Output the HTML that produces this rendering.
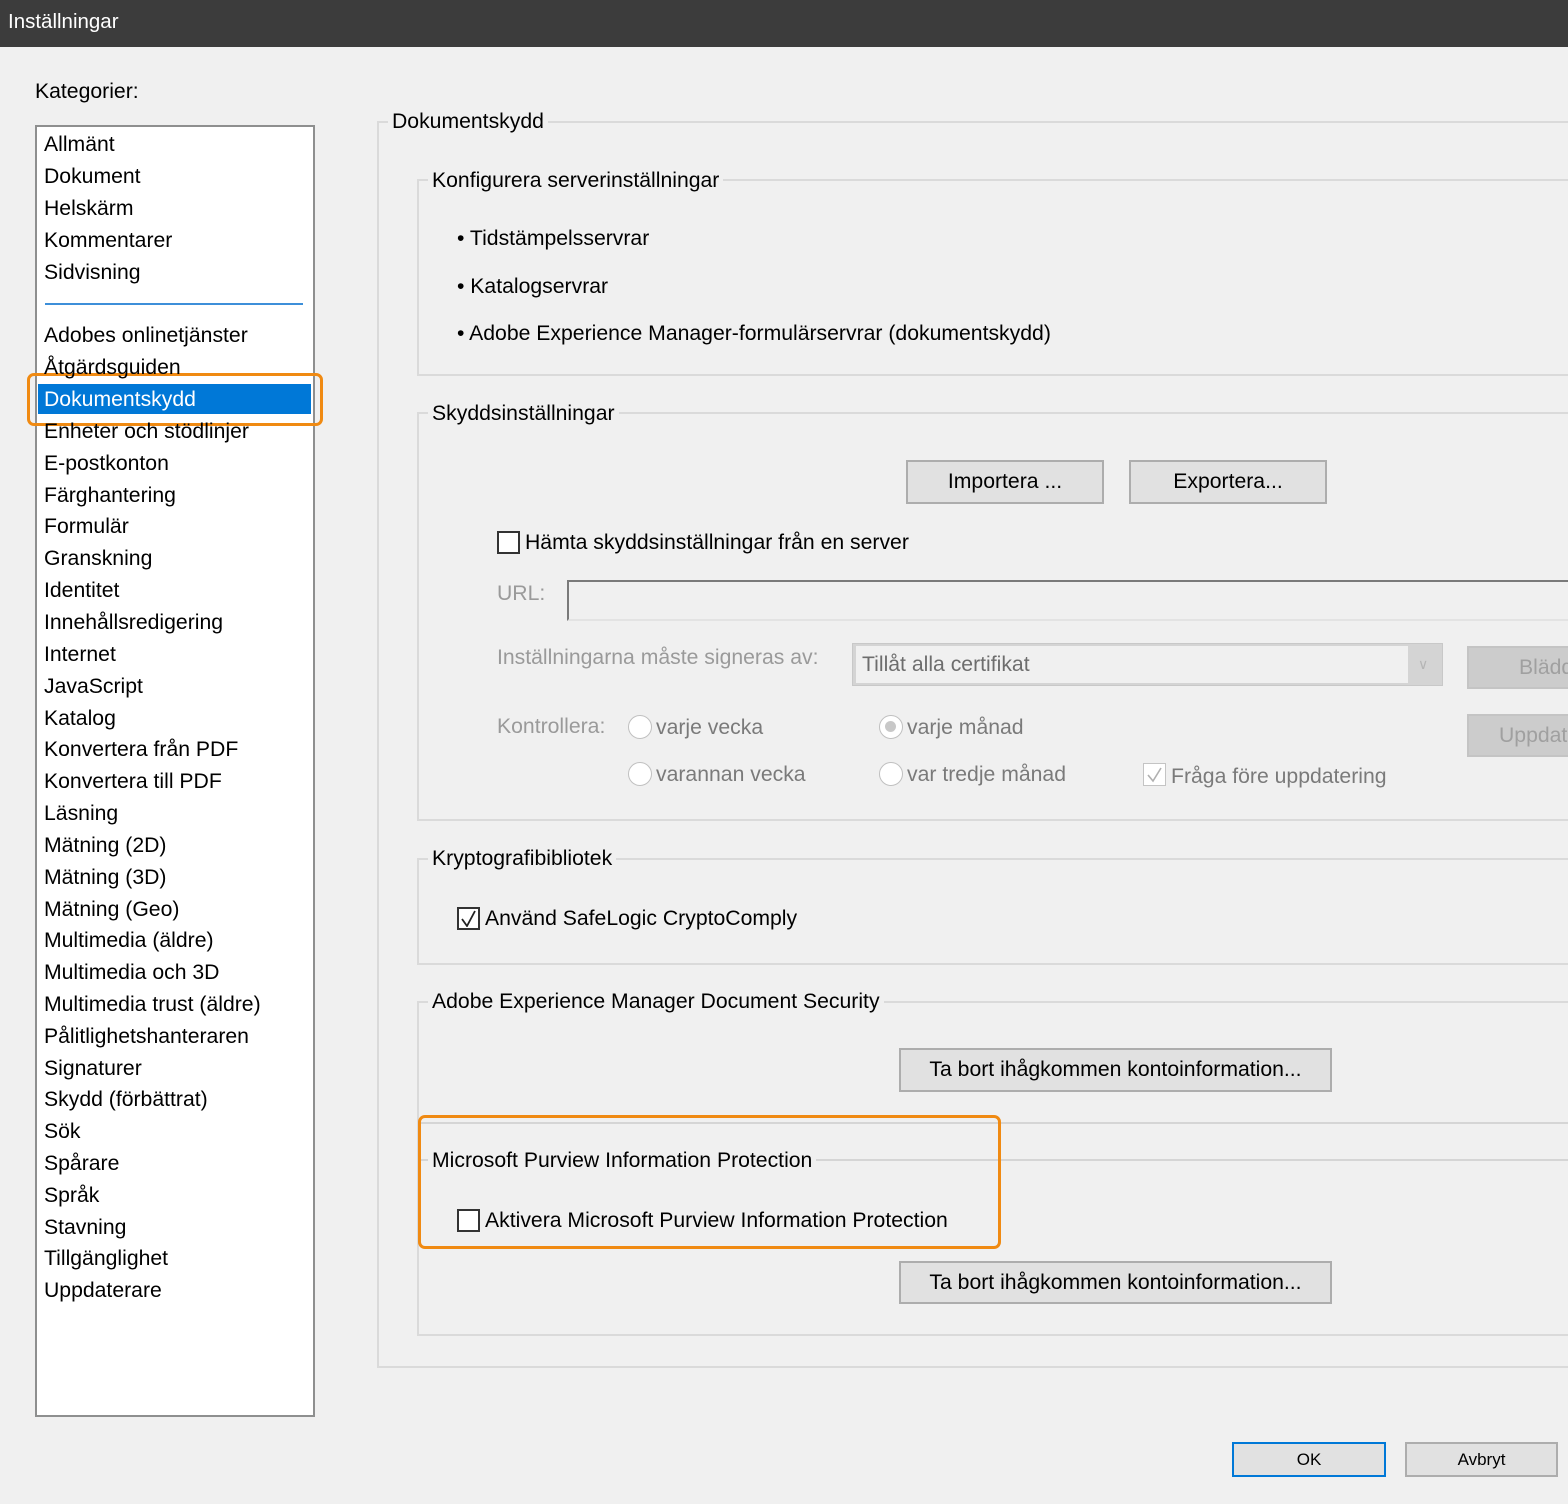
<!DOCTYPE html>
<html><head><meta charset="utf-8"><style>
*{margin:0;padding:0;box-sizing:border-box}
body{width:1568px;height:1504px;background:#f0f0f0;font-family:"Liberation Sans",sans-serif;font-size:21.2px;color:#000;position:relative;overflow:hidden}
.a{position:absolute}
.t{position:absolute;height:26px;line-height:28px;white-space:nowrap}
.g{color:#9a9a9a}
.ln{position:absolute;background:#d5d5d5}
.btn{position:absolute;background:#e1e1e1;border:2px solid #adadad;text-align:center;white-space:nowrap}
.dis{background:#cccccc;border:2px solid #c4c4c4;color:#a0a0a0}
.cb{position:absolute;width:23px;height:23px;border:2px solid #333;background:#fff}
.rd{position:absolute;width:24px;height:24px;border:1.5px solid #c0c0c0;border-radius:50%;background:#fff}
.leg{position:absolute;height:26px;line-height:28px;background:#f0f0f0;padding:0 4px;white-space:nowrap}
</style></head><body>
<div class="a" style="left:0;top:0;width:1568px;height:47px;background:#3c3c3c"></div>
<div class="t" style="left:8px;top:8px;color:#fff;font-size:20.5px">Inställningar</div>

<div class="t" style="left:35px;top:78px">Kategorier:</div>
<div class="a" style="left:35px;top:125px;width:280px;height:1292px;background:#fff;border:2px solid #8e8f8f"></div>
<div class="a" style="left:45px;top:303px;width:258px;height:2px;background:#3d8fd9"></div>
<div class="a" style="left:38px;top:384px;width:273px;height:30px;background:#0078d7"></div>
<div class="a" style="left:27px;top:373px;width:296px;height:53px;border:3px solid #f08a12;border-radius:7px"></div>

<div class="a" style="left:377px;top:121px;width:1300px;height:1247px;border:2px solid #dadada"></div>
<div class="leg" style="left:388px;top:108px">Dokumentskydd</div>

<div class="a" style="left:417px;top:179px;width:1300px;height:197px;border:2px solid #dadada"></div>
<div class="leg" style="left:428px;top:167px">Konfigurera serverinställningar</div>
<div class="t" style="left:457px;top:225px">• Tidstämpelsservrar</div>
<div class="t" style="left:457px;top:273px">• Katalogservrar</div>
<div class="t" style="left:457px;top:320px">• Adobe Experience Manager-formulärservrar (dokumentskydd)</div>

<div class="a" style="left:417px;top:412px;width:1300px;height:409px;border:2px solid #dadada"></div>
<div class="leg" style="left:428px;top:400px">Skyddsinställningar</div>
<div class="btn" style="left:906px;top:460px;width:198px;height:44px;line-height:40px">Importera ...</div>
<div class="btn" style="left:1129px;top:460px;width:198px;height:44px;line-height:40px">Exportera...</div>
<div class="cb" style="left:497px;top:531px"></div>
<div class="t" style="left:525px;top:529px">Hämta skyddsinställningar från en server</div>
<div class="t g" style="left:497px;top:580px">URL:</div>
<div class="a" style="left:567px;top:580px;width:1010px;height:41px;border-top:2px solid #7a7a7a;border-left:2px solid #7a7a7a;border-bottom:2px solid #e3e3e3;background:#f0f0f0"></div>
<div class="t g" style="left:497px;top:644px">Inställningarna måste signeras av:</div>
<div class="a" style="left:852px;top:643px;width:591px;height:43px;background:#d4d4d4;border:1px solid #c8c8c8"></div>
<div class="a" style="left:856px;top:646px;width:552px;height:37px;background:#f0f0f0"></div>
<div class="t" style="left:862px;top:651px;color:#6d6d6d">Tillåt alla certifikat</div>
<div class="t" style="left:1418px;top:650px;color:#b5b5b5;font-size:14px">∨</div>
<div class="btn dis" style="left:1467px;top:646px;width:120px;height:43px;line-height:39px;text-align:left;padding-left:50px">Bläddra</div>
<div class="t g" style="left:497px;top:713px">Kontrollera:</div>
<div class="rd" style="left:628px;top:715px"></div><div class="t" style="left:656px;top:714px;color:#7a7a7a">varje vecka</div>
<div class="rd" style="left:879px;top:715px"><div class="a" style="left:5px;top:5px;width:11px;height:11px;border-radius:50%;background:#c8c8c8"></div></div><div class="t" style="left:907px;top:714px;color:#7a7a7a">varje månad</div>
<div class="rd" style="left:628px;top:762px"></div><div class="t" style="left:656px;top:761px;color:#7a7a7a">varannan vecka</div>
<div class="rd" style="left:879px;top:762px"></div><div class="t" style="left:907px;top:761px;color:#7a7a7a">var tredje månad</div>
<div class="cb" style="left:1143px;top:763px;border:1.5px solid #c4c4c4"><svg class="a" style="left:2px;top:2px" width="17" height="17"><path d="M2 9 L7 15 L15 2" fill="none" stroke="#b0b0b0" stroke-width="1.6"/></svg></div>
<div class="t" style="left:1171px;top:763px;color:#7a7a7a">Fråga före uppdatering</div>
<div class="btn dis" style="left:1467px;top:714px;width:120px;height:43px;line-height:39px;text-align:left;padding-left:30px">Uppdatera</div>

<div class="a" style="left:417px;top:858px;width:1300px;height:107px;border:2px solid #dadada"></div>
<div class="leg" style="left:428px;top:845px">Kryptografibibliotek</div>
<div class="cb" style="left:457px;top:907px"><svg class="a" style="left:1px;top:1px" width="17" height="17"><path d="M2 9 L7 16 L15 1" fill="none" stroke="#222" stroke-width="1.8"/></svg></div>
<div class="t" style="left:485px;top:905px">Använd SafeLogic CryptoComply</div>

<div class="a" style="left:417px;top:1001px;width:1300px;height:335px;border:2px solid #dadada"></div>
<div class="leg" style="left:428px;top:988px">Adobe Experience Manager Document Security</div>
<div class="btn" style="left:899px;top:1048px;width:433px;height:44px;line-height:40px">Ta bort ihågkommen kontoinformation...</div>
<div class="ln" style="left:418px;top:1122px;width:1200px;height:2px"></div>
<div class="ln" style="left:418px;top:1159px;width:1200px;height:2px"></div>
<div class="leg" style="left:428px;top:1147px">Microsoft Purview Information Protection</div>
<div class="cb" style="left:457px;top:1209px"></div>
<div class="t" style="left:485px;top:1207px">Aktivera Microsoft Purview Information Protection</div>
<div class="btn" style="left:899px;top:1261px;width:433px;height:43px;line-height:39px">Ta bort ihågkommen kontoinformation...</div>
<div class="a" style="left:418px;top:1115px;width:583px;height:134px;border:3px solid #f08a12;border-radius:7px"></div>

<div class="btn" style="left:1232px;top:1442px;width:154px;height:35px;line-height:31px;border-color:#0078d7;font-size:17px">OK</div>
<div class="btn" style="left:1405px;top:1442px;width:153px;height:35px;line-height:31px;font-size:17px">Avbryt</div>

<div class="t" style="left:44px;top:131px">Allmänt</div>
<div class="t" style="left:44px;top:163px">Dokument</div>
<div class="t" style="left:44px;top:195px">Helskärm</div>
<div class="t" style="left:44px;top:227px">Kommentarer</div>
<div class="t" style="left:44px;top:259px">Sidvisning</div>
<div class="t" style="left:44px;top:322px">Adobes onlinetjänster</div>
<div class="t" style="left:44px;top:354px">Åtgärdsguiden</div>
<div class="t" style="left:44px;top:386px;color:#fff">Dokumentskydd</div>
<div class="t" style="left:44px;top:418px">Enheter och stödlinjer</div>
<div class="t" style="left:44px;top:450px">E-postkonton</div>
<div class="t" style="left:44px;top:482px">Färghantering</div>
<div class="t" style="left:44px;top:513px">Formulär</div>
<div class="t" style="left:44px;top:545px">Granskning</div>
<div class="t" style="left:44px;top:577px">Identitet</div>
<div class="t" style="left:44px;top:609px">Innehållsredigering</div>
<div class="t" style="left:44px;top:641px">Internet</div>
<div class="t" style="left:44px;top:673px">JavaScript</div>
<div class="t" style="left:44px;top:705px">Katalog</div>
<div class="t" style="left:44px;top:736px">Konvertera från PDF</div>
<div class="t" style="left:44px;top:768px">Konvertera till PDF</div>
<div class="t" style="left:44px;top:800px">Läsning</div>
<div class="t" style="left:44px;top:832px">Mätning (2D)</div>
<div class="t" style="left:44px;top:864px">Mätning (3D)</div>
<div class="t" style="left:44px;top:896px">Mätning (Geo)</div>
<div class="t" style="left:44px;top:927px">Multimedia (äldre)</div>
<div class="t" style="left:44px;top:959px">Multimedia och 3D</div>
<div class="t" style="left:44px;top:991px">Multimedia trust (äldre)</div>
<div class="t" style="left:44px;top:1023px">Pålitlighetshanteraren</div>
<div class="t" style="left:44px;top:1055px">Signaturer</div>
<div class="t" style="left:44px;top:1086px">Skydd (förbättrat)</div>
<div class="t" style="left:44px;top:1118px">Sök</div>
<div class="t" style="left:44px;top:1150px">Spårare</div>
<div class="t" style="left:44px;top:1182px">Språk</div>
<div class="t" style="left:44px;top:1214px">Stavning</div>
<div class="t" style="left:44px;top:1245px">Tillgänglighet</div>
<div class="t" style="left:44px;top:1277px">Uppdaterare</div>
</body></html>
